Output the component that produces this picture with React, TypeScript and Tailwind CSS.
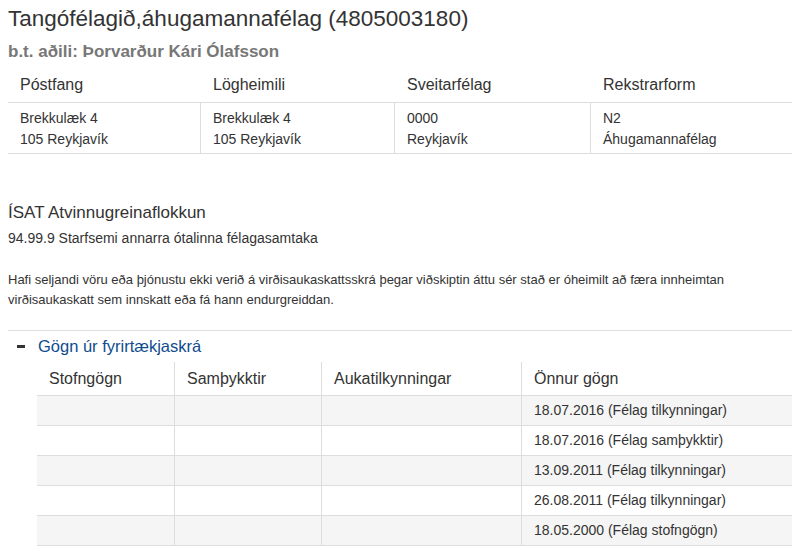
import React from 'react';

const addressCols = [
  { title: 'Póstfang', lines: ['Brekkulæk 4', '105 Reykjavík'] },
  { title: 'Lögheimili', lines: ['Brekkulæk 4', '105 Reykjavík'] },
  { title: 'Sveitarfélag', lines: ['0000', 'Reykjavík'] },
  { title: 'Rekstrarform', lines: ['N2', 'Áhugamannafélag'] },
];

const docHeaders = ['Stofngögn', 'Samþykktir', 'Aukatilkynningar', 'Önnur gögn'];

const otherDocs = [
  '18.07.2016 (Félag tilkynningar)',
  '18.07.2016 (Félag samþykktir)',
  '13.09.2011 (Félag tilkynningar)',
  '26.08.2011 (Félag tilkynningar)',
  '18.05.2000 (Félag stofngögn)',
];

export default function App() {
  return (
    <div className="min-h-[547px] w-[792px] overflow-hidden bg-white pl-2 pt-[5px] font-['Liberation_Sans',Arial,sans-serif] text-[#333]">
      <h1 className="text-[22.5px] leading-[27px]">Tangófélagið,áhugamannafélag (4805003180)</h1>
      <h2 className="mt-[10px] text-[17px] font-bold leading-[20px] text-[#777]">
        b.t. aðili: Þorvarður Kári Ólafsson
      </h2>

      {/* Addresses */}
      <div className="mt-[6px] grid grid-cols-[192px_194px_196px_1fr]">
        {addressCols.map((col, i) => (
          <div key={col.title} className={`flex h-[35px] items-center text-[16px] border-b border-[#ddd] ${i === 0 ? 'pl-3' : 'pl-[13px]'}`}>
            {col.title}
          </div>
        ))}
        {addressCols.map((col, i) => (
          <div
            key={col.title + '-v'}
            className={`h-[51px] border-b border-[#ddd] pt-[5px] text-[14px] leading-[21px] ${i === 0 ? 'pl-3' : 'border-l pl-3'}`}
          >
            {col.lines.map((l) => (
              <div key={l}>{l}</div>
            ))}
          </div>
        ))}
      </div>

      {/* ISAT */}
      <h3 className="mt-[49px] text-[17px] leading-[20px]">ÍSAT Atvinnugreinaflokkun</h3>
      <p className="mt-[5px] text-[14px] leading-[20px]">94.99.9 Starfsemi annarra ótalinna félagasamtaka</p>

      <p className="mt-[22px] whitespace-nowrap text-[13px] leading-[20px]">
        Hafi seljandi vöru eða þjónustu ekki verið á virðisaukaskattsskrá þegar viðskiptin áttu sér stað er óheimilt að færa innheimtan
        <br />
        virðisaukaskatt sem innskatt eða fá hann endurgreiddan.
      </p>

      <div className="mt-[20px] border-t border-[#ddd]" />

      {/* Documents */}
      <div className="mt-[5px] flex items-center text-[16.5px] leading-[20px]">
        <span className="ml-[9px] mr-[13px] h-[3px] w-[8px] bg-[#333]" />
        <span className="text-[#0f4c8e]">Gögn úr fyrirtækjaskrá</span>
      </div>

      <div className="ml-[29px] mt-[6px]">
        <div className="grid grid-cols-[137px_147px_200px_1fr] border-b border-[#ddd]">
          {docHeaders.map((h, i) => (
            <div key={h} className={`flex h-[33px] items-center pl-3 text-[16px] ${i > 0 ? 'border-l border-[#ddd]' : ''}`}>
              {h}
            </div>
          ))}
        </div>
        {otherDocs.map((d, r) => (
          <div
            key={d}
            className={`grid h-[30px] grid-cols-[137px_147px_200px_1fr] border-b border-[#ddd] text-[14px] ${r % 2 === 0 ? 'bg-[#f5f5f5]' : 'bg-white'}`}
          >
            <div />
            <div className="border-l border-[#ddd]" />
            <div className="border-l border-[#ddd]" />
            <div className="flex items-center border-l border-[#ddd] pl-3">{d}</div>
          </div>
        ))}
      </div>
    </div>
  );
}
